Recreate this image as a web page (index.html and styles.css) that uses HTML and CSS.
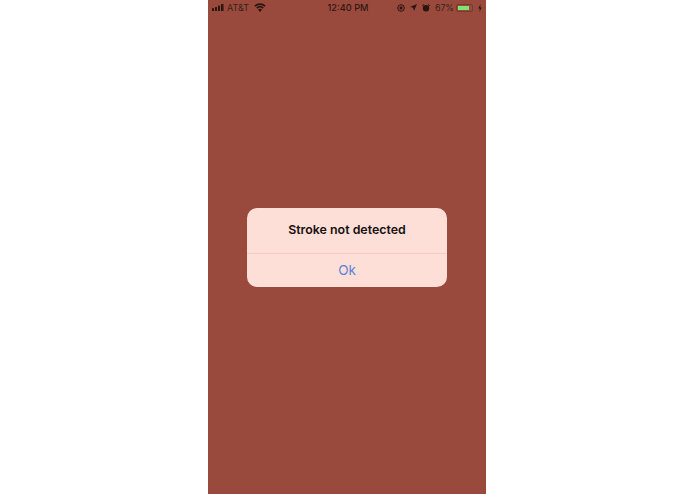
FILE: index.html
```html
<!DOCTYPE html>
<html lang="en">
<head>
<meta charset="utf-8">
<title>Stroke not detected</title>
<link rel="stylesheet" href="styles.css">
</head>
<body>
<main class="phone">
  <header class="status">
    <div class="status-left">
      <svg class="signal" width="13" height="7" viewBox="0 0 13 7"><rect x="0" y="4" width="2" height="3" rx=".5"/><rect x="3" y="3" width="2" height="4" rx=".5"/><rect x="6" y="1.500" width="2" height="5.500" rx=".5"/><rect x="9" y="0" width="2.500" height="7" rx=".5"/></svg>
      <span class="carrier">AT&amp;T</span>
      <svg class="wifi" width="12" height="9" viewBox="0 0 12 9"><path d="M6 9 L4 6.600 A3 3 0 0 1 8 6.600Z"/><path d="M3.200 5.700 L2.200 4.500 A5.800 5.800 0 0 1 9.800 4.500 L8.800 5.700 A4.200 4.200 0 0 0 3.200 5.700Z"/><path d="M1.500 3.700 L.3 2.400 A8.500 8.500 0 0 1 11.700 2.400 L10.500 3.700 A7 7 0 0 0 1.500 3.700Z"/></svg>
    </div>
    <div class="time">12:40 PM</div>
    <div class="status-right">
      <svg class="lock" width="8" height="8" viewBox="0 0 8 8"><circle class="lock-ring" cx="4" cy="4" r="3.300"/><rect x="2.600" y="2.600" width="2.800" height="2.800" rx=".6"/></svg>
      <svg class="arrow" width="7" height="7" viewBox="0 0 7 7"><path d="M7 0 L0 3 L3.200 3.800 L4 7Z M5 2 L3.800 3.200 L3.900 3.500Z"/></svg>
      <svg class="alarm" width="8" height="8" viewBox="0 0 8 8"><circle cx="4" cy="4.300" r="3.200"/><path d="M0 1.700 L1.700 0 L2.300 .6 L.6 2.300Z M8 1.700 L6.300 0 L5.700 .6 L7.400 2.300Z"/></svg>
      <span class="percent">67%</span>
      <div class="battery"><div class="battery-fill"></div></div>
      <svg class="bolt" width="4" height="8" viewBox="0 0 3 7"><path d="M2 0 L0 4 L1.300 4 L1 7 L3 3 L1.700 3Z"/></svg>
    </div>
  </header>
  <div class="alert-wrap">
    <section class="alert">
      <h1 class="alert-title">Stroke not detected</h1>
      <div class="alert-action">Ok</div>
    </section>
  </div>
</main>
</body>
</html>
```

FILE: styles.css
```css
* { box-sizing: border-box; }
html, body { margin: 0; height: 100%; background: #fff; }
body { display: flex; justify-content: center; overflow: hidden; font-family: Inter, "Liberation Sans", sans-serif; }
.phone { width: 278px; height: 494px; margin-left: -1px; background: #994a3c; display: flex; flex-direction: column; }
.status { height: 15px; padding: 0 4px; display: grid; grid-template-columns: 1fr auto 1fr; align-items: center; color: #2a1511; font-size: 9px; }
.status svg { fill: #2a1511; display: block; flex: none; }
.status .lock-ring { fill: none; stroke: #2a1511; stroke-width: 1; }
.status-left, .status-right { display: flex; align-items: center; }
.status-left { gap: 2px; }
.carrier { color: #3a1f1a; }
.wifi { margin-left: 3px; }
.time { font-weight: 500; font-size: 9.2px; color: #2f1814; padding-left: 2px; }
.status-right { justify-content: flex-end; gap: 5px; }
.percent { color: #3a1f1a; font-size: 8.800px; margin-right: -3px; }
.battery { width: 17px; height: 8px; padding: 1px; border: 1px solid #6a4036; border-radius: 2px; }
.battery-fill { width: 11px; height: 100%; background: #86e070; }
.alert-wrap { flex: 1; display: flex; justify-content: center; padding-top: 193px; }
.alert { width: 200px; height: 79px; background: #fedfd8; border-radius: 10px; display: flex; flex-direction: column; }
.alert-title { margin: 0; height: 46px; padding-bottom: 3px; display: flex; align-items: center; justify-content: center; font-size: 12.400px; font-weight: 600; color: #16100f; border-bottom: 1px solid #f6cabf; }
.alert-action { flex: 1; padding-bottom: 2px; display: flex; align-items: center; justify-content: center; font-size: 13.500px; color: #5c7fd6; }
```
